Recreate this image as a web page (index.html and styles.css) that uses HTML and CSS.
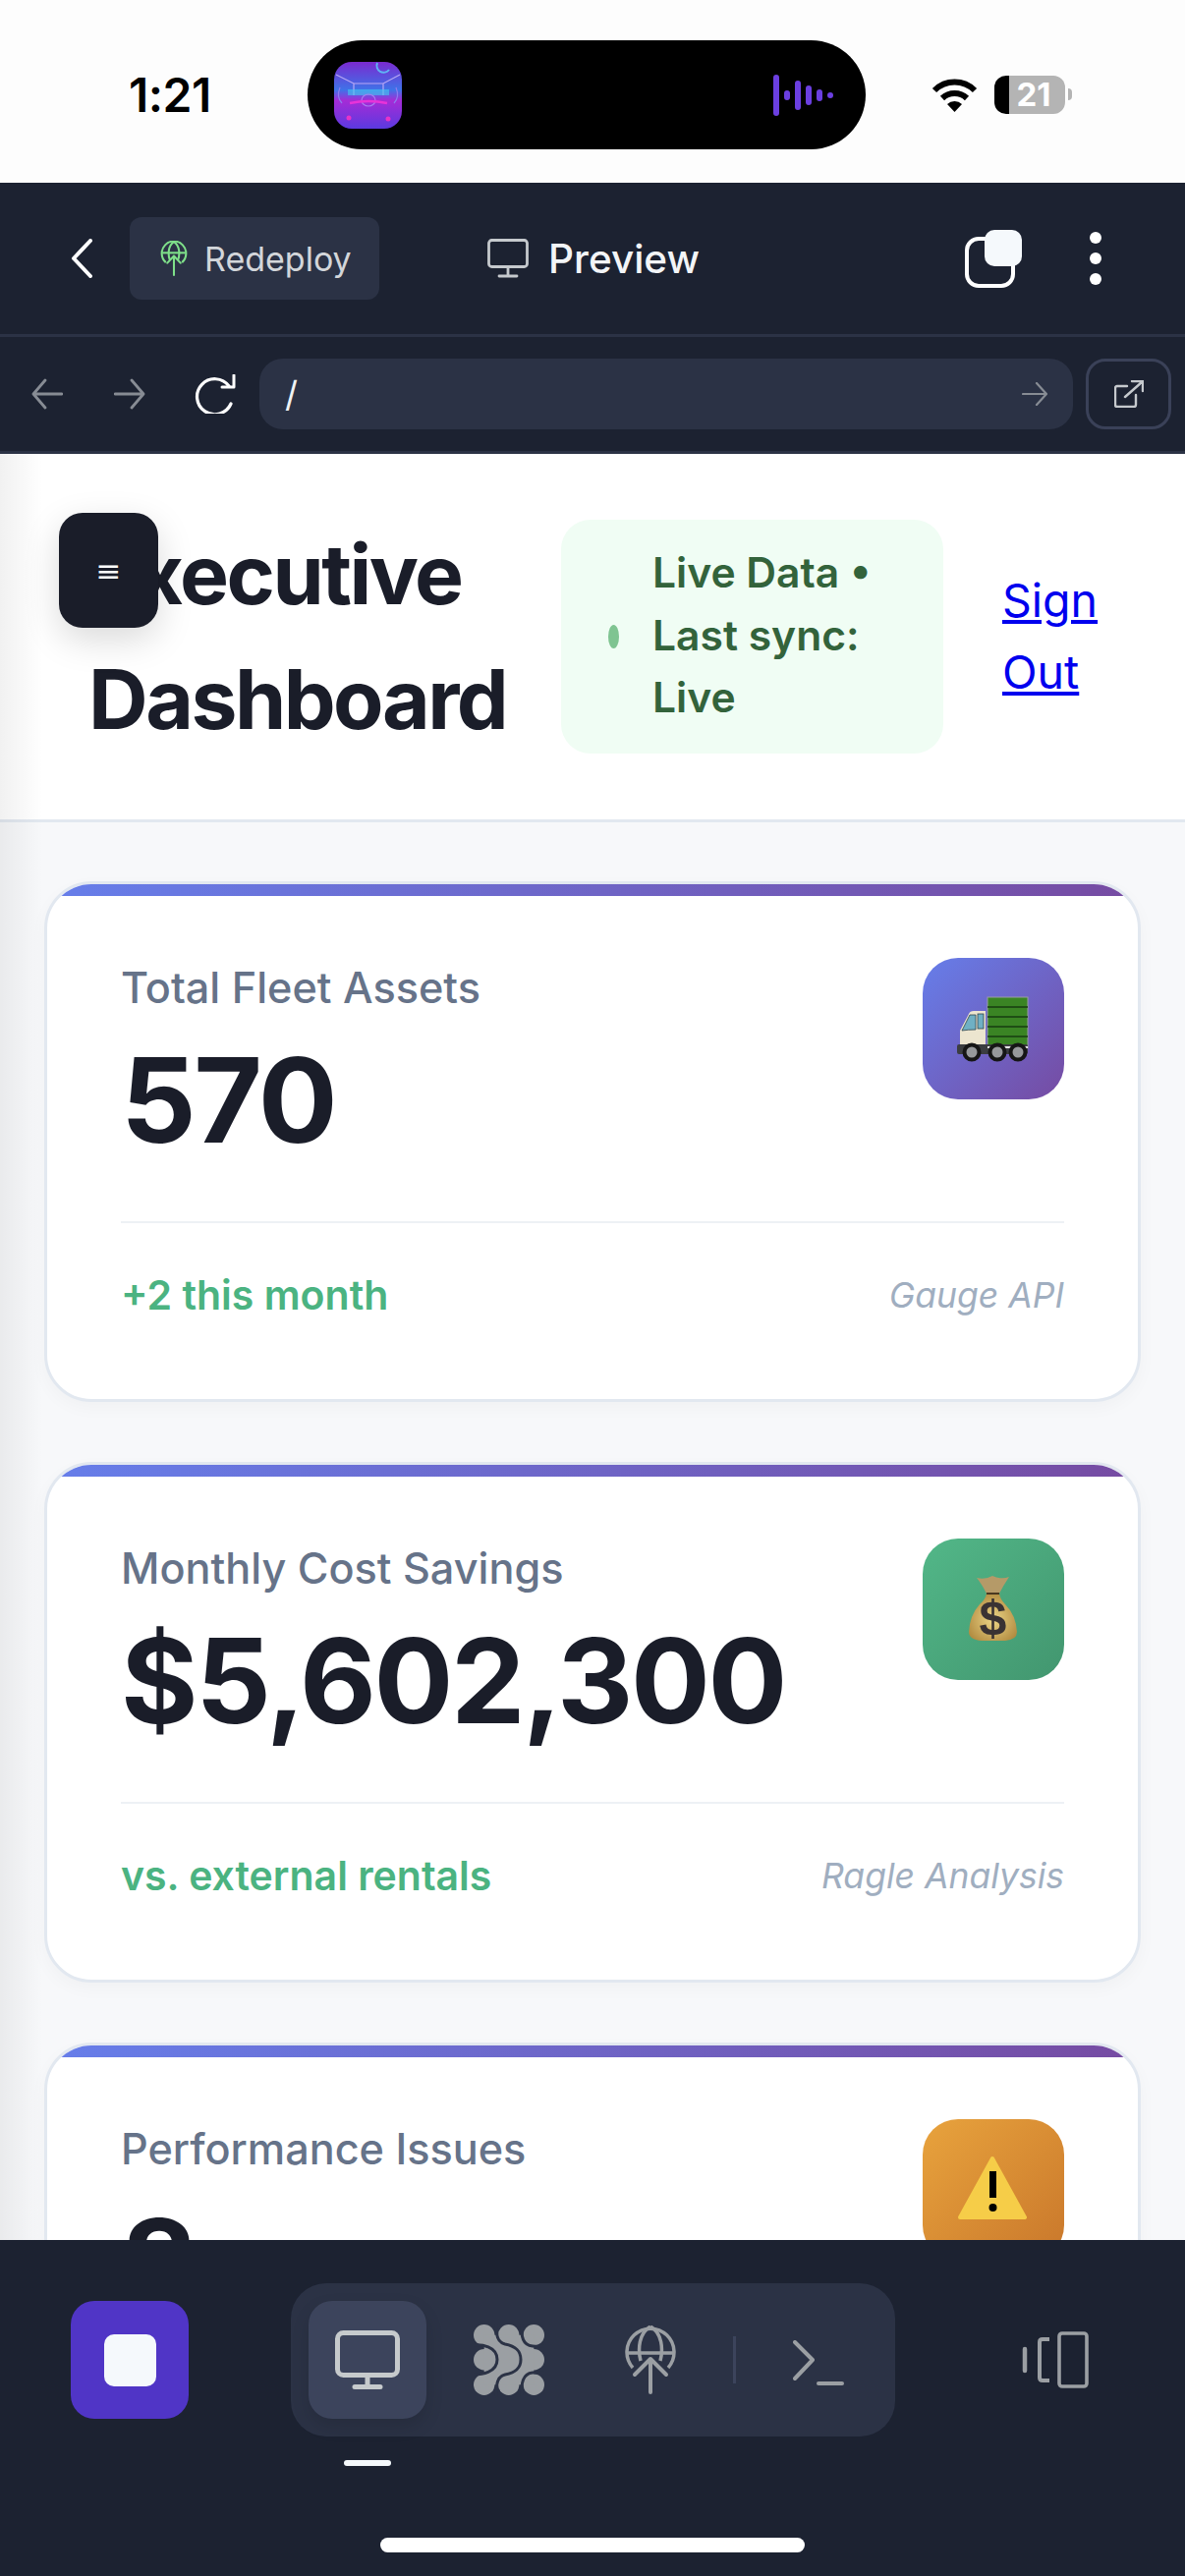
FILE: index.html
```html
<!DOCTYPE html>
<html lang="en">
<head>
<meta charset="utf-8">
<title>Executive Dashboard</title>
<link rel="stylesheet" href="styles.css">
</head>
<body>
<div class="phone">
  <div class="status">
    <span class="time">1:21</span>
    <div class="island">
      <svg class="thumb" viewBox="0 0 69 68">
        <defs>
          <linearGradient id="th" x1="0" y1="0" x2="0" y2="1"><stop offset="0" stop-color="#7a2ad0"/><stop offset=".42" stop-color="#3f72e8"/><stop offset=".58" stop-color="#a52bd6"/><stop offset="1" stop-color="#5b3ae0"/></linearGradient>
        </defs>
        <rect width="69" height="68" rx="18" fill="url(#th)"/>
        <path d="M2 13 L20 22 H50 L67 13 M20 22 V34 M50 22 V34" stroke="#b9a8f5" stroke-width="1.200" fill="none"/>
        <rect x="14" y="28" width="42" height="6" fill="#45c8f0" opacity=".6"/>
        <ellipse cx="35" cy="39" rx="7" ry="6" fill="none" stroke="#a97cf0" stroke-width="1.200"/>
        <path d="M6 26 Q2 36 8 42 M63 26 Q67 36 61 42" stroke="#8d7cf0" stroke-width="1.200" fill="none"/>
        <path d="M16 42 Q35 38 54 42" stroke="#e833d8" stroke-width="2.500" fill="none"/>
        <path d="M44 1 A7 7 0 0 0 56 8" stroke="#5fb4f5" stroke-width="2" fill="none"/>
        <circle cx="15" cy="57" r="2.500" fill="#e833c8"/><circle cx="55" cy="58" r="2.500" fill="#e833c8"/>
      </svg>
      <svg class="wave" viewBox="0 0 62 42">
        <g fill="#6b3fe0">
          <rect x="0" y="0" width="6" height="42" rx="3"/><rect x="11" y="16" width="6" height="10" rx="3"/><rect x="22" y="6" width="6" height="30" rx="3"/><rect x="33" y="11" width="6" height="20" rx="3"/><rect x="44" y="15" width="6" height="12" rx="3"/><rect x="55" y="18" width="6" height="6" rx="3"/>
        </g>
      </svg>
    </div>
    <div class="status-right">
      <svg class="wifi" viewBox="0 0 47 35">
        <path d="M3 13 A29 29 0 0 1 44 13" fill="none" stroke="#000" stroke-width="6"/>
        <path d="M11 21 A18 18 0 0 1 36 21" fill="none" stroke="#000" stroke-width="6"/>
        <path d="M16 27 L23.500 35 L31 27 A11 11 0 0 0 16 27Z" fill="#000"/>
      </svg>
      <div class="battery"><span class="battery-num">21</span></div>
      <span class="battery-nub"></span>
    </div>
  </div>

  <div class="topbar">
    <svg class="back" viewBox="0 0 22 40"><path d="M20 2 L3 20 L20 38" fill="none" stroke="#fff" stroke-width="4" stroke-linecap="round" stroke-linejoin="round"/></svg>
    <div class="chip">
      <svg class="chip-icon" viewBox="0 0 52 70" fill="none" stroke="#7fe08a" stroke-width="4">
        <path d="M10 43 A24 24 0 1 1 42 43"/>
        <path d="M3 24 H49"/>
        <path d="M26 2 C14 10 14 28 18 38 M26 2 C38 10 38 28 34 38"/>
        <path d="M26 68 V30 M13 44 L26 30 L39 44" stroke-linecap="round" stroke-linejoin="round"/>
      </svg>
      <span class="chip-text">Redeploy</span>
    </div>
    <div class="pane-title">
      <svg class="pane-icon" viewBox="0 0 42 40" fill="none" stroke="#c5c9cd" stroke-width="2.800">
        <rect x="1.500" y="1.500" width="39" height="27" rx="3"/>
        <path d="M21 29 V37 M12 38 H30" stroke-linecap="round"/>
      </svg>
      <span class="pane-text">Preview</span>
    </div>
    <div class="tabs-icon"><span class="tab-back"></span><span class="tab-front"></span></div>
    <div class="dots"><span></span><span></span><span></span></div>
  </div>

  <div class="urlbar">
    <svg class="nav-arrow" viewBox="0 0 32 32" fill="none" stroke="#878c94" stroke-width="2.800" stroke-linecap="round" stroke-linejoin="round"><path d="M31 16 H2 M14 2 L2 16 L14 30"/></svg>
    <svg class="nav-arrow fwd" viewBox="0 0 32 32" fill="none" stroke="#878c94" stroke-width="2.800" stroke-linecap="round" stroke-linejoin="round"><path d="M1 16 H30 M18 2 L30 16 L18 30"/></svg>
    <svg class="reload" viewBox="0 0 44 40" fill="none" stroke="#fff" stroke-width="3.200" stroke-linecap="round" stroke-linejoin="round"><path d="M37 12 A18 18 0 1 0 39 30"/><path d="M42 1 V13 H30" stroke-width="3"/></svg>
    <div class="url-field">
      <span class="url-text">/</span>
      <svg class="url-go" viewBox="0 0 26 24" fill="none" stroke="#878c94" stroke-width="2.200" stroke-linecap="round" stroke-linejoin="round"><path d="M1 12 H25 M15 1 L25 12 L15 23"/></svg>
    </div>
    <div class="open-btn">
      <svg class="open-icon" viewBox="0 0 30 28" fill="none" stroke="#c5c9cd" stroke-width="2.400" stroke-linecap="round" stroke-linejoin="round"><path d="M13 6 H3 Q1 6 1 8 V25 Q1 27 3 27 H20 Q22 27 22 25 V15"/><path d="M11 17 L28 2 M18 1 H29 V11"/></svg>
    </div>
  </div>

  <div class="main">
    <span class="edge edge-left"></span>
    <button class="menu-btn">≡</button>
    <header class="page-head">
      <h1 class="page-title">Executive Dashboard</h1>
      <div class="live-pill">
        <span class="live-dot"></span>
        <span class="live-text">Live Data • Last sync: Live</span>
      </div>
      <a class="sign-out" href="#">Sign Out</a>
    </header>
    <div class="cards">
      <section class="card">
        <div class="card-bar"></div>
        <div class="card-body">
          <div class="card-top">
            <div class="card-copy">
              <div class="card-label">Total Fleet Assets</div>
              <div class="card-value">570</div>
            </div>
            <div class="card-icon icon-purple">
              <svg viewBox="0 0 144 144" class="emoji">
                <rect x="66" y="40" width="41" height="52" fill="#3a8424" stroke="#9a9ca8" stroke-width="1"/>
                <path d="M66 50 H107 M66 60 H107 M66 70 H107 M66 80 H107" stroke="#173d10" stroke-width="1.500"/>
                <path d="M38 90 V74 L47 57 Q48 54 52 54 H64 V90Z" fill="#ece5cf"/>
                <path d="M40 74 L48 58 H54 V73 Q46 73 40 74Z" fill="#6fb0c4" stroke="#30444c" stroke-width=".8"/>
                <rect x="56" y="57" width="6" height="15" fill="#6fb0c4" stroke="#30444c" stroke-width=".8"/>
                <rect x="35" y="88" width="72" height="10" rx="2" fill="#3b3d40"/>
                <rect x="66" y="90" width="41" height="2" fill="#e8e8e8"/>
                <g fill="#97999c" stroke="#161616" stroke-width="4">
                  <circle cx="50" cy="96" r="7.500"/><circle cx="76" cy="96" r="7.500"/><circle cx="97" cy="96" r="7.500"/>
                </g>
              </svg>
            </div>
          </div>
          <div class="card-foot">
            <span class="foot-note">+2 this month</span>
            <span class="foot-src">Gauge API</span>
          </div>
        </div>
      </section>
      <section class="card">
        <div class="card-bar"></div>
        <div class="card-body">
          <div class="card-top">
            <div class="card-copy">
              <div class="card-label">Monthly Cost Savings</div>
              <div class="card-value">$5,602,300</div>
            </div>
            <div class="card-icon icon-green">
              <svg viewBox="0 0 144 144" class="emoji">
                <defs>
                  <radialGradient id="bag" cx=".5" cy=".55" r=".6"><stop offset="0" stop-color="#ecd587"/><stop offset="1" stop-color="#b0893e"/></radialGradient>
                </defs>
                <path d="M55 40 Q64 42 71 38 Q80 42 88 39 Q82 48 78 56 H65 Q60 46 55 40Z" fill="#b59a68"/>
                <path d="M65 56 Q64 62 58 67 Q48 78 47 95 Q47 103 60 104 H84 Q96 103 96 95 Q95 78 84 67 Q79 62 78 56Z" fill="url(#bag)"/>
                <path d="M65 56 H78" stroke="#4a3820" stroke-width="2"/>
                <text x="71.500" y="98" class="bag-sign">$</text>
              </svg>
            </div>
          </div>
          <div class="card-foot">
            <span class="foot-note">vs. external rentals</span>
            <span class="foot-src">Ragle Analysis</span>
          </div>
        </div>
      </section>
      <section class="card">
        <div class="card-bar"></div>
        <div class="card-body">
          <div class="card-top">
            <div class="card-copy">
              <div class="card-label">Performance Issues</div>
              <div class="card-value">8</div>
            </div>
            <div class="card-icon icon-orange">
              <svg viewBox="0 0 144 144" class="emoji">
                <path d="M71 40 L104 100 H38Z" fill="#f6cd48" stroke="#f6cd48" stroke-width="4" stroke-linejoin="round"/>
                <rect x="68" y="53" width="7" height="27" fill="#000"/>
                <circle cx="71.500" cy="90" r="4" fill="#000"/>
              </svg>
            </div>
          </div>
        </div>
      </section>
    </div>
  </div>

  <div class="dock">
    <div class="dock-row">
      <div class="stop-btn"><span class="stop-square"></span></div>
      <div class="tool-pill">
        <div class="tool tool-active">
          <svg viewBox="0 0 66 60" class="tool-monitor" fill="none" stroke="#c6cacc" stroke-width="5"><rect x="2.500" y="2.500" width="61" height="43" rx="6"/><path d="M33 46 V57 M20 57.500 H46" stroke-linecap="round"/></svg>
        </div>
        <div class="tool">
          <svg viewBox="12 11 72 73" class="tool-blobs">
            <g fill="#9b9fa3">
              <circle cx="22.700" cy="21.700" r="10.700"/><circle cx="47.700" cy="21.700" r="10.700"/><circle cx="73.300" cy="21.700" r="10.700"/>
              <circle cx="22.700" cy="46.700" r="10.700"/><circle cx="73.300" cy="46.700" r="10.700"/>
              <circle cx="22.700" cy="72.300" r="10.700"/><circle cx="47.700" cy="72.300" r="10.700"/><circle cx="73.300" cy="72.300" r="10.700"/>
              <rect x="22.700" y="21.700" width="50.600" height="50.600"/>
            </g>
            <g fill="none" stroke="#2b3245" stroke-width="3">
              <path d="M11 32 C20 31 36 33 36 46.700 C36 60 20 62 11 62"/>
              <path d="M35 10 C35 22 36 29 44 31 C54 33 60 37 60 46.700 C60 56 54 60 44 62 C36 64 35 71 35 85"/>
              <path d="M60.500 10 C60.500 24 62 32 72 33 C78 33.500 82 33 86 33"/>
              <path d="M60.500 85 C60.500 70 62 61 72 60 C78 59.500 82 60 86 60"/>
            </g>
          </svg>
        </div>
        <div class="tool">
          <svg viewBox="0 0 52 70" class="tool-globe" fill="none" stroke="#9b9fa3" stroke-width="3.500">
            <path d="M8 43 A24 24 0 1 1 44 43"/><path d="M2 28 H50"/><path d="M26 1 C14 8 13 24 16 36 M26 1 C38 8 39 24 36 36"/>
            <path d="M26 68 V34 M10 50 L26 34 L42 50" stroke-width="4" stroke-linecap="round" stroke-linejoin="round"/>
          </svg>
        </div>
        <span class="tool-sep"></span>
        <div class="tool tool-last">
          <svg viewBox="0 0 52 46" class="tool-term" fill="none" stroke="#9b9fa3" stroke-width="4" stroke-linecap="round" stroke-linejoin="round"><path d="M2 2 L20 20 L2 39"/><path d="M26 44 H50"/></svg>
        </div>
      </div>
      <svg class="device-icon" viewBox="0 0 68 58" fill="none" stroke="#9b9fa3" stroke-width="3.600"><rect x="38" y="2" width="28" height="54" rx="3"/><path d="M28 8 H21 Q18 8 18 11 V47 Q18 50 21 50 H28" stroke-width="4"/><path d="M3 18 V40" stroke-width="4.500" stroke-linecap="round"/></svg>
    </div>
    <span class="tool-mark"></span>
    <span class="home-bar"></span>
  </div>
</div>
</body>
</html>
```
FILE: styles.css
```css
* { box-sizing: border-box; }
html, body { margin: 0; padding: 0; }
body { width: 1206px; height: 2622px; overflow: hidden; font-family: Inter, "Liberation Sans", sans-serif; background: #1c2231; }
.phone { width: 1206px; height: 2622px; display: flex; flex-direction: column; overflow: hidden; }

.status { height: 186px; background: #fdfdfd; display: flex; align-items: center; flex: none; }
.time { margin-left: 131px; width: 182px; font-size: 48px; font-weight: 600; color: #000; letter-spacing: -.5px; margin-top: 6px; }
.island { width: 568px; height: 111px; margin-top: 7px; background: #000; border-radius: 56px; display: flex; align-items: center; justify-content: space-between; padding: 0 32px 0 27px; }
.thumb { width: 69px; height: 68px; display: block; }
.wave { width: 62px; height: 42px; display: block; }
.status-right { margin-left: 67px; margin-top: 6px; display: flex; align-items: center; }
.wifi { width: 47px; height: 35px; display: block; }
.battery { width: 72px; height: 39px; margin-left: 17px; border-radius: 12px; background: linear-gradient(90deg, #000 15px, #b4b4b4 15px); display: flex; align-items: center; justify-content: center; }
.battery-num { color: #fff; font-size: 33px; font-weight: 700; margin-left: 8px; line-height: 1; }
.battery-nub { width: 4px; height: 12px; margin-left: 3px; border-radius: 0 4px 4px 0; background: #b4b4b4; }

.topbar { height: 157px; background: #1c2231; display: flex; align-items: center; flex: none; border-bottom: 3px solid #2b3245; }
.back { width: 22px; height: 40px; margin-left: 72px; display: block; }
.chip { width: 254px; height: 84px; margin-left: 38px; background: #2b3245; border-radius: 12px; display: flex; align-items: center; padding-left: 31px; }
.chip-icon { width: 28px; height: 36px; display: block; }
.chip-text { margin-left: 17px; font-size: 34px; color: #d3d6da; font-weight: 400; }
.pane-title { display: flex; align-items: center; margin-left: 110px; }
.pane-icon { width: 42px; height: 40px; display: block; }
.pane-text { margin-left: 20px; font-size: 40.500px; font-weight: 500; color: #f3f5f7; }
.tabs-icon { position: relative; width: 58px; height: 59px; margin-left: auto; }
.tab-back { position: absolute; left: 0; bottom: 0; width: 51px; height: 52px; border: 4px solid #fff; border-radius: 14px; }
.tab-front { position: absolute; right: 0; top: 0; width: 38px; height: 37px; background: #f5f9fc; border-radius: 10px; }
.dots { display: flex; flex-direction: column; gap: 9px; margin-left: 69px; margin-right: 85px; }
.dots span { width: 12px; height: 12px; border-radius: 50%; background: #fff; }

.urlbar { height: 119px; background: #1c2231; display: flex; align-items: center; flex: none; border-bottom: 3px solid #2b3245; padding-right: 14px; }
.nav-arrow { width: 32px; height: 32px; margin-left: 32px; display: block; }
.nav-arrow.fwd { margin-left: 52px; }
.reload { width: 44px; height: 40px; margin-left: 48px; display: block; }
.url-field { flex: 1; height: 72px; margin-left: 24px; background: #2b3245; border-radius: 24px; display: flex; align-items: center; justify-content: space-between; padding: 0 26px 0 26px; }
.url-text { font-size: 36px; color: #f0f2f4; font-weight: 400; }
.url-go { width: 26px; height: 24px; display: block; }
.open-btn { width: 87px; height: 72px; margin-left: 13px; border: 3px solid #3a4158; border-radius: 20px; display: flex; align-items: center; justify-content: center; }
.open-icon { width: 30px; height: 28px; display: block; }

.main { position: relative; flex: 1; min-height: 0; overflow: hidden; background: #f7f8fa; }
.edge { position: absolute; left: 0; top: 0; bottom: 0; width: 44px; z-index: 1; background: linear-gradient(90deg, rgba(0,0,0,.055), rgba(0,0,0,0)); pointer-events: none; }
.menu-btn { position: absolute; z-index: 3; left: 60px; top: 60px; width: 101px; height: 117px; border: 0; border-radius: 24px; background: #1a1d29; color: #fff; font-size: 31px; font-family: "DejaVu Sans", sans-serif; padding: 0; box-shadow: 0 12px 36px rgba(0,0,0,.15); }

.page-head { height: 375px; background: #fff; border-bottom: 3px solid #e2e8f0; display: flex; align-items: center; padding-left: 90px; }
.page-title { width: 481px; flex: none; margin: 0; font-size: 84px; letter-spacing: -2.520px; line-height: 127px; font-weight: 700; color: #1a1d29; }
.live-pill { width: 389px; flex: none; height: 238px; background: #f0fdf4; border-radius: 30px; display: flex; align-items: center; gap: 34px; padding: 0 44px 0 48px; }
.live-dot { width: 11px; height: 24px; flex: none; border-radius: 50%; background: #7fc491; }
.live-text { margin-top: -3px; font-size: 42.600px; line-height: 63.400px; font-weight: 600; color: #33633b; }
.sign-out { width: 110px; flex: none; margin-left: 60px; font-size: 46.500px; line-height: 73px; color: #0000ee; }

.cards { display: flex; flex-direction: column; gap: 61px; padding: 60px 45px 0; }
.card { flex: none; background: #fff; border: 3px solid #e2e8f0; border-radius: 48px; overflow: hidden; height: 530px; box-shadow: 0 6px 18px rgba(0,0,0,.03); }
.card-bar { height: 12px; background: linear-gradient(90deg, #667eea, #764ba2); }
.card-body { padding: 63px 75px 0 75px; }
.card-top { display: flex; justify-content: space-between; align-items: flex-start; height: 204px; }
.card-label { font-size: 43.200px; line-height: 60px; font-weight: 500; color: #667389; }
.card-value { margin-top: 16px; font-size: 120px; letter-spacing: -2.400px; line-height: 138px; font-weight: 700; color: #1a1d29; }
.card-icon { width: 144px; height: 144px; flex: none; border-radius: 36px; }
.emoji { width: 144px; height: 144px; display: block; }
.icon-purple { background: linear-gradient(135deg, #667eea, #764ba2); }
.icon-green { background: linear-gradient(135deg, #52b788, #42966f); }
.icon-orange { background: linear-gradient(135deg, #e8a33d, #c9772b); }
.bag-sign { font-family: "Liberation Sans", sans-serif; font-size: 50px; font-weight: 700; fill: #3a3233; text-anchor: middle; }
.card-foot { margin-top: 64px; border-top: 2px solid #edf1f5; padding-top: 48px; display: flex; justify-content: space-between; align-items: center; }
.foot-note { font-size: 41px; font-weight: 600; color: #4bb381; }
.foot-src { font-size: 35.500px; font-style: italic; color: #a0aec0; }

.dock { flex: none; height: 342px; background: #1c2231; display: flex; flex-direction: column; padding-top: 44px; position: relative; z-index: 4; }
.dock-row { display: flex; align-items: center; height: 156px; }
.stop-btn { width: 120px; height: 120px; margin-left: 72px; border-radius: 24px; background: #5035c6; display: flex; align-items: center; justify-content: center; }
.stop-square { width: 53px; height: 53px; border-radius: 10px; background: #f5f9fc; }
.tool-pill { width: 615px; height: 156px; margin-left: 104px; background: #2b3245; border-radius: 36px; display: flex; align-items: center; padding-left: 18px; }
.tool { width: 120px; height: 120px; flex: none; margin-left: 24px; border-radius: 24px; display: flex; align-items: center; justify-content: center; }
.tool-active { margin-left: 0; background: #3c445c; box-shadow: 0 8px 18px rgba(0,0,0,.12); }
.tool-monitor { width: 66px; height: 60px; display: block; }
.tool-blobs { width: 72px; height: 73px; display: block; }
.tool-globe { width: 52px; height: 70px; display: block; }
.tool-term { width: 52px; height: 46px; display: block; margin-top: 6px; }
.tool-sep { width: 3px; height: 48px; flex: none; background: #3c445c; margin-left: 24px; }
.tool-last { width: 52px; margin-left: 58px; }
.device-icon { width: 68px; height: 58px; margin-left: 129px; display: block; }
.tool-mark { width: 48px; height: 6px; margin: 24px 0 0 350px; border-radius: 3px; background: #f5f9fc; }
.home-bar { width: 432px; height: 15px; margin: 73px 0 0 387px; border-radius: 8px; background: #fff; }
```
